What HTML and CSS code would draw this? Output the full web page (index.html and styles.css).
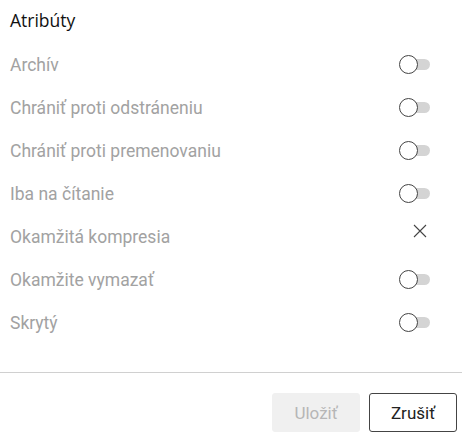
FILE: index.html
```html
<!DOCTYPE html>
<html lang="sk">
<head>
<meta charset="utf-8">
<link rel="stylesheet" href="styles.css">
</head>
<body>
<div class="dialog">
  <div class="title">Atribúty</div>
  <div class="list">
    <div class="row"><span class="label">Archív</span><span class="toggle"><span class="track"></span><span class="knob"></span></span></div>
    <div class="row"><span class="label">Chrániť proti odstráneniu</span><span class="toggle"><span class="track"></span><span class="knob"></span></span></div>
    <div class="row"><span class="label">Chrániť proti premenovaniu</span><span class="toggle"><span class="track"></span><span class="knob"></span></span></div>
    <div class="row"><span class="label">Iba na čítanie</span><span class="toggle"><span class="track"></span><span class="knob"></span></span></div>
    <div class="row"><span class="label">Okamžitá kompresia</span><span class="cross"><svg width="14" height="14" viewBox="0 0 14 14"><path d="M1 1L13 13M13 1L1 13" stroke="#444" stroke-width="1.1" fill="none"/></svg></span></div>
    <div class="row"><span class="label">Okamžite vymazať</span><span class="toggle"><span class="track"></span><span class="knob"></span></span></div>
    <div class="row"><span class="label">Skrytý</span><span class="toggle"><span class="track"></span><span class="knob"></span></span></div>
  </div>
  <div class="divider"></div>
  <div class="footer">
    <button class="btn btn-disabled">Uložiť</button>
    <button class="btn btn-outline">Zrušiť</button>
  </div>
</div>
</body>
</html>
```
FILE: styles.css
```css
html, body {
  margin: 0;
  padding: 0;
  background: #fff;
}
.dialog {
  width: 462px;
  height: 440px;
  font-family: Roboto, "Liberation Sans", sans-serif;
}
.title {
  height: 40px;
  line-height: 40px;
  padding-left: 10px;
  font-family: "Open Sans", "Noto Sans", sans-serif;
  font-size: 17.5px;
  font-weight: 500;
  color: #111;
}
.list {
  padding-top: 3px;
}
.row {
  height: 43px;
  display: flex;
  align-items: center;
  justify-content: space-between;
  padding-left: 10px;
  padding-right: 32px;
}
.label {
  font-size: 17.5px;
  color: #a2a2a2;
}
.toggle {
  position: relative;
  width: 31px;
  height: 19px;
}
.track {
  position: absolute;
  left: 12px;
  top: 4px;
  width: 19px;
  height: 11px;
  border-radius: 6px;
  background: #d4d4d4;
}
.knob {
  position: absolute;
  left: 0;
  top: 0;
  width: 17px;
  height: 17px;
  border: 1px solid #444;
  border-radius: 50%;
  background: #fff;
}
.cross {
  display: flex;
  width: 31px;
  justify-content: flex-end;
  padding-right: 3px;
  box-sizing: border-box;
  margin-top: -12px;
}
.divider {
  margin-top: 28px;
  height: 1px;
  background: #d0d0d0;
}
.footer {
  display: flex;
  justify-content: flex-end;
  gap: 9px;
  padding-top: 20px;
  padding-right: 5px;
}
.btn {
  height: 39px;
  width: 88px;
  font-family: Roboto, "Liberation Sans", sans-serif;
  font-size: 17px;
  border-radius: 3px;
}
.btn-disabled {
  background: #f0f0f0;
  border: 1px solid #f0f0f0;
  color: #b6b6b6;
}
.btn-outline {
  background: #fff;
  border: 1px solid #444;
  color: #222;
}
```
